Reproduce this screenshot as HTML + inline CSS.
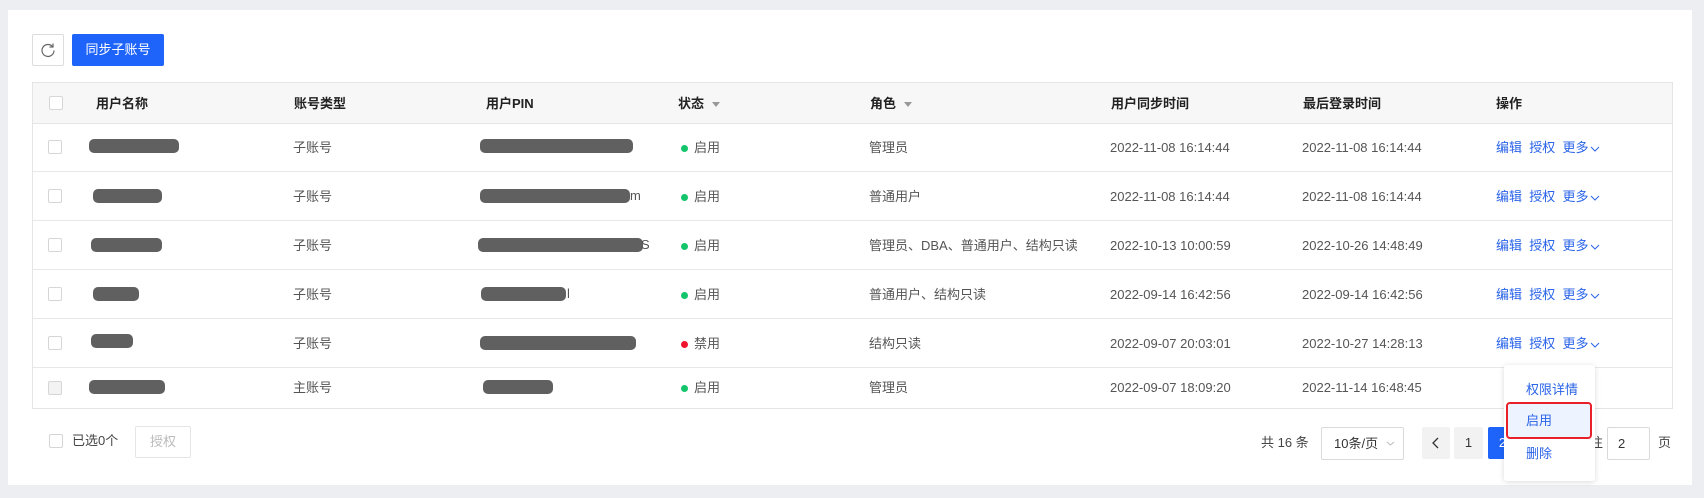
<!DOCTYPE html>
<html><head><meta charset="utf-8"><style>
*{margin:0;padding:0;box-sizing:border-box}
body{width:1704px;height:498px;background:#eceef2;font-family:"Liberation Sans","Noto Sans CJK SC",sans-serif;font-size:13px;line-height:16px;color:#555;position:relative;overflow:hidden}
.abs{position:absolute}
.panel{left:8px;top:10px;width:1684px;height:475px;background:#fff}
.btnr{left:32px;top:34px;width:32px;height:32px;border:1px solid #dcdcdc;border-radius:2px;background:#fff}
.btnb{left:72px;top:34px;width:92px;height:32px;background:#1e64fa;border-radius:2px;color:#fff;text-align:center;line-height:32px;font-size:13px}
.table{left:32px;top:82px;width:1641px;height:327px;border:1px solid #e5e5e5;overflow:hidden}
.hd{left:0;top:0;width:100%;height:41px;background:#f7f7f7;border-bottom:1px solid #e5e5e5}
.row{left:0;width:100%;height:49px;border-bottom:1px solid #e8e8e8}
.cb{width:14px;height:14px;border:1px solid #d6d6d6;border-radius:2px;background:#fff}
.th{font-weight:bold;color:#222;top:13px}
.bar{height:14px;background:#606060;border-radius:5px}
.dot{width:7px;height:7px;border-radius:50%}
.link{color:#2a64e8}
.tri{display:inline-block;width:0;height:0;border-left:4px solid transparent;border-right:4px solid transparent;border-top:5px solid #999;margin-left:8px;vertical-align:middle}
.pg{height:32px;border-radius:2px;text-align:center;line-height:32px}
.chev{display:inline-block;vertical-align:middle;margin-left:2px}
</style></head><body>
<div class="abs panel"></div>
<div class="abs btnr"><svg width="30" height="30" viewBox="0 0 30 30"><path d="M19.5 11.5 A6 6 0 1 0 21 15.5" fill="none" stroke="#666" stroke-width="1.2"/><path d="M20 8.5 L20 12 L16.5 12" fill="none" stroke="#666" stroke-width="1.2"/></svg></div>
<div class="abs btnb">同步子账号</div>

<div class="abs table">
 <div class="abs hd">
  <div class="abs cb" style="left:16px;top:13px"></div>
  <div class="abs th" style="left:63px">用户名称</div>
  <div class="abs th" style="left:261px">账号类型</div>
  <div class="abs th" style="left:453px">用户PIN</div>
  <div class="abs th" style="left:645px">状态<span class="tri"></span></div>
  <div class="abs th" style="left:837px">角色<span class="tri"></span></div>
  <div class="abs th" style="left:1078px">用户同步时间</div>
  <div class="abs th" style="left:1270px">最后登录时间</div>
  <div class="abs th" style="left:1463px">操作</div>
 </div>
</div>

<div class="abs" style="left:33px;top:123px;width:1639px;height:286px">
 <div class="abs row" style="top:0">
  <div class="abs cb" style="left:15px;top:17px"></div>
  <div class="abs bar" style="left:56px;top:16px;width:90px"></div>
  <div class="abs" style="left:260px;top:17px">子账号</div>
  <div class="abs bar" style="left:447px;top:16px;width:153px"></div>
  <div class="abs dot" style="left:648px;top:22px;background:#13c46b"></div>
  <div class="abs" style="left:661px;top:17px">启用</div>
  <div class="abs" style="left:836px;top:17px">管理员</div>
  <div class="abs" style="left:1077px;top:17px">2022-11-08 16:14:44</div>
  <div class="abs" style="left:1269px;top:17px">2022-11-08 16:14:44</div>
  <div class="abs link" style="left:1463px;top:17px">编辑&nbsp; 授权&nbsp; 更多<svg class="chev" width="10" height="8"><path d="M1 2 L5 6 L9 2" fill="none" stroke="#2a64e8"/></svg></div>
 </div>
 <div class="abs row" style="top:49px">
  <div class="abs cb" style="left:15px;top:17px"></div>
  <div class="abs bar" style="left:60px;top:17px;width:69px"></div>
  <div class="abs" style="left:260px;top:17px">子账号</div>
  <div class="abs bar" style="left:447px;top:17px;width:150px"></div><div class="abs" style="left:597px;top:16px">m</div>
  <div class="abs dot" style="left:648px;top:22px;background:#13c46b"></div>
  <div class="abs" style="left:661px;top:17px">启用</div>
  <div class="abs" style="left:836px;top:17px">普通用户</div>
  <div class="abs" style="left:1077px;top:17px">2022-11-08 16:14:44</div>
  <div class="abs" style="left:1269px;top:17px">2022-11-08 16:14:44</div>
  <div class="abs link" style="left:1463px;top:17px">编辑&nbsp; 授权&nbsp; 更多<svg class="chev" width="10" height="8"><path d="M1 2 L5 6 L9 2" fill="none" stroke="#2a64e8"/></svg></div>
 </div>
 <div class="abs row" style="top:98px">
  <div class="abs cb" style="left:15px;top:17px"></div>
  <div class="abs bar" style="left:58px;top:17px;width:71px"></div>
  <div class="abs" style="left:260px;top:17px">子账号</div>
  <div class="abs bar" style="left:445px;top:17px;width:165px"></div><div class="abs" style="left:608px;top:16px">S</div>
  <div class="abs dot" style="left:648px;top:22px;background:#13c46b"></div>
  <div class="abs" style="left:661px;top:17px">启用</div>
  <div class="abs" style="left:836px;top:17px">管理员、DBA、普通用户、结构只读</div>
  <div class="abs" style="left:1077px;top:17px">2022-10-13 10:00:59</div>
  <div class="abs" style="left:1269px;top:17px">2022-10-26 14:48:49</div>
  <div class="abs link" style="left:1463px;top:17px">编辑&nbsp; 授权&nbsp; 更多<svg class="chev" width="10" height="8"><path d="M1 2 L5 6 L9 2" fill="none" stroke="#2a64e8"/></svg></div>
 </div>
 <div class="abs row" style="top:147px">
  <div class="abs cb" style="left:15px;top:17px"></div>
  <div class="abs bar" style="left:60px;top:17px;width:46px"></div>
  <div class="abs" style="left:260px;top:17px">子账号</div>
  <div class="abs bar" style="left:448px;top:17px;width:85px"></div><div class="abs" style="left:534px;top:16px">l</div>
  <div class="abs dot" style="left:648px;top:22px;background:#13c46b"></div>
  <div class="abs" style="left:661px;top:17px">启用</div>
  <div class="abs" style="left:836px;top:17px">普通用户、结构只读</div>
  <div class="abs" style="left:1077px;top:17px">2022-09-14 16:42:56</div>
  <div class="abs" style="left:1269px;top:17px">2022-09-14 16:42:56</div>
  <div class="abs link" style="left:1463px;top:17px">编辑&nbsp; 授权&nbsp; 更多<svg class="chev" width="10" height="8"><path d="M1 2 L5 6 L9 2" fill="none" stroke="#2a64e8"/></svg></div>
 </div>
 <div class="abs row" style="top:196px">
  <div class="abs cb" style="left:15px;top:17px"></div>
  <div class="abs bar" style="left:58px;top:15px;width:42px"></div>
  <div class="abs" style="left:260px;top:17px">子账号</div>
  <div class="abs bar" style="left:447px;top:17px;width:156px"></div>
  <div class="abs dot" style="left:648px;top:22px;background:#f0142d"></div>
  <div class="abs" style="left:661px;top:17px">禁用</div>
  <div class="abs" style="left:836px;top:17px">结构只读</div>
  <div class="abs" style="left:1077px;top:17px">2022-09-07 20:03:01</div>
  <div class="abs" style="left:1269px;top:17px">2022-10-27 14:28:13</div>
  <div class="abs link" style="left:1463px;top:17px">编辑&nbsp; 授权&nbsp; 更多<svg class="chev" width="10" height="8"><path d="M1 2 L5 6 L9 2" fill="none" stroke="#2a64e8"/></svg></div>
 </div>
 <div class="abs" style="top:245px;left:0;width:100%;height:40px">
  <div class="abs cb" style="left:15px;top:13px;background:#f3f3f3"></div>
  <div class="abs bar" style="left:56px;top:12px;width:76px"></div>
  <div class="abs" style="left:260px;top:12px">主账号</div>
  <div class="abs bar" style="left:450px;top:12px;width:70px"></div>
  <div class="abs dot" style="left:648px;top:17px;background:#13c46b"></div>
  <div class="abs" style="left:661px;top:12px">启用</div>
  <div class="abs" style="left:836px;top:12px">管理员</div>
  <div class="abs" style="left:1077px;top:12px">2022-09-07 18:09:20</div>
  <div class="abs" style="left:1269px;top:12px">2022-11-14 16:48:45</div>
 </div>
</div>

<div class="abs cb" style="left:49px;top:434px"></div>
<div class="abs" style="left:72px;top:433px;color:#444">已选0个</div>
<div class="abs" style="left:135px;top:426px;width:56px;height:32px;border:1px solid #e5e5e5;border-radius:2px;color:#bbb;text-align:center;line-height:30px">授权</div>

<div class="abs" style="left:1261px;top:435px;color:#444">共 16 条</div>
<div class="abs" style="left:1321px;top:427px;width:83px;height:33px;border:1px solid #d9d9d9;border-radius:2px;padding-left:12px;line-height:31px;color:#333">10条/页<svg style="position:absolute;right:8px;top:12px" width="9" height="7"><path d="M1 2 L4.5 5 L8 2" fill="none" stroke="#bbb"/></svg></div>
<div class="abs pg" style="left:1422px;top:427px;width:28px;background:#f2f2f2"><svg width="10" height="12" style="margin-top:10px"><path d="M7 1 L2 6 L7 11" fill="none" stroke="#333" stroke-width="1.3"/></svg></div>
<div class="abs pg" style="left:1454px;top:427px;width:29px;background:#f2f2f2;color:#333">1</div>
<div class="abs pg" style="left:1488px;top:427px;width:29px;background:#1e64fa;color:#fff">2</div>
<div class="abs" style="left:1590px;top:435px;color:#444">往</div>
<div class="abs" style="left:1607px;top:427px;width:43px;height:33px;border:1px solid #d9d9d9;border-radius:2px;padding-left:10px;line-height:31px;color:#333">2</div>
<div class="abs" style="left:1658px;top:435px;color:#444">页</div>

<div class="abs" style="left:1504px;top:365px;width:91px;height:116px;background:#fff;border-radius:3px;box-shadow:0 1px 6px rgba(0,0,0,.15)">
 <div class="abs link" style="left:22px;top:17px">权限详情</div>
 <div class="abs" style="left:2px;top:37px;width:86px;height:37px;background:#eef4ff;border:2px solid #e8202a;border-radius:4px"></div>
 <div class="abs link" style="left:22px;top:48px">启用</div>
 <div class="abs link" style="left:22px;top:81px">删除</div>
</div>
</body></html>
